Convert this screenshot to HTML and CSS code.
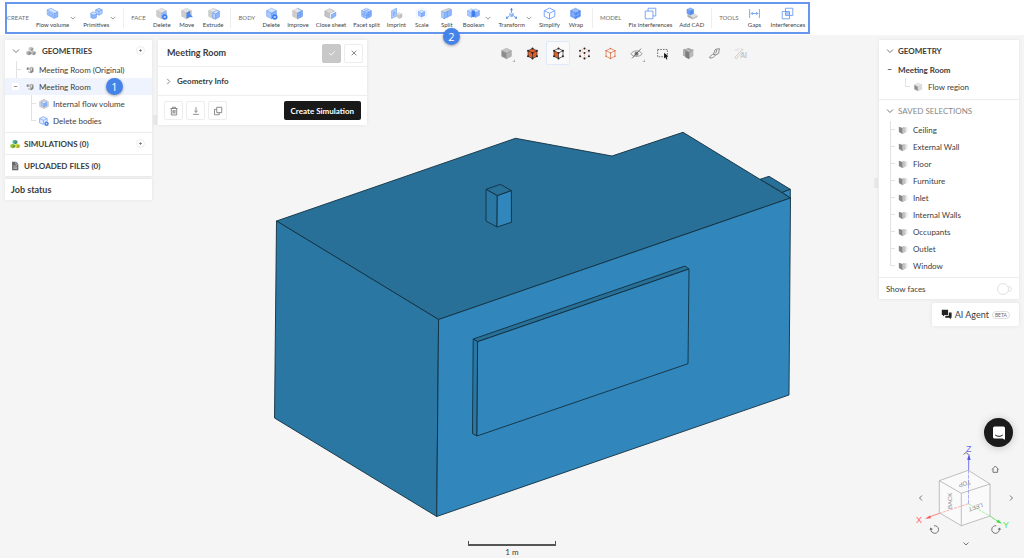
FILE: index.html
```html
<!DOCTYPE html>
<html lang="en">
<head>
<meta charset="utf-8">
<title>Meeting Room</title>
<link rel="stylesheet" href="styles.css">
</head>
<body>
<svg class="defs" aria-hidden="true">
  <symbol id="cube" viewBox="0 0 16 16">
    <path class="c-top" d="M8 1.500 14 4.500 8 7.500 2 4.500Z"/><path class="c-left" d="M2 4.500 8 7.500V14.500L2 11.500Z"/><path class="c-right" d="M14 4.500 8 7.500V14.500L14 11.500Z"/>
  </symbol>
  <symbol id="chev" viewBox="0 0 8 8"><path class="line" d="M1 2.500 4 5.500 7 2.500"/></symbol>
  <symbol id="plus" viewBox="0 0 10 10"><circle cx="5" cy="5" r="4.400" fill="#fff" stroke="#e2e2e2" stroke-width=".7"/><path d="M3.400 5h3.200M5 3.400v3.200" stroke="#666" stroke-width=".8"/></symbol>
  <symbol id="cubes" viewBox="0 0 12 12">
    <path class="k1" d="M6 .8 8.800 2v3L6 6.200 3.200 5V2Z"/><path class="k2" d="M3.200 5.800 6 7v3L3.200 11.200.4 10V7Z"/><path class="k3" d="M8.800 5.800 11.600 7v3L8.800 11.200 6 10V7Z"/><path class="kd" d="M6 3.200 8.800 2v3L6 6.200ZM3.200 8.200 6 7v3L3.200 11.200ZM8.800 8.200 11.600 7v3L8.800 11.200Z"/>
  </symbol>
  <symbol id="part" viewBox="0 0 12 12"><path d="M5 2.500 8 1 11 2V8.500L7.500 11 3 9.500V8L6 8.500V6H5Z" fill="#b4b4b4"/><path d="M7.500 4 9.500 3V7.500L7.500 8.500Z" fill="#eee"/><path d="M1 2.500 4 2V6L1 5.500ZM9.800 3.500 11 2.500V8.500L7.500 11 7 9.500Z" fill="#858585"/></symbol>
  <symbol id="faces" viewBox="0 0 12 12"><path d="M8.500 2 11.500 3V8L8.500 10Z" fill="#ebebeb"/><path d="M5.500 2 9 3V9L5.500 11Z" fill="#c4c4c4"/><path d="M1 2 5.500 3.500V11L1 8.500Z" fill="#868686"/></symbol>
</svg>

<header class="topbar">
  <nav class="tools" aria-label="Geometry operations">
    <h2 class="group">CREATE</h2>
    <button class="tool menu"><span class="cell"><svg viewBox="0 0 16 16"><path class="b1" d="M1.500 3.500 6 1.500 14.500 6 10 8Z"/><path class="b2" d="M1.500 3.500 10 8v6L1.500 9.500Z"/><path class="b3" d="M14.500 6 10 8v6l4.500-2Z"/><path class="bl" d="M1.500 3.500 6 1.500 14.500 6v6L10 14 1.500 9.500ZM10 8v6M1.500 3.500 10 8l4.500-2M3.500 6.500 8 9v2.500L3.500 9Z"/></svg>Flow volume</span><svg class="chev"><use href="#chev"/></svg></button>
    <button class="tool menu"><span class="cell"><svg viewBox="0 0 16 16"><path class="b2" d="M7 3.500 11 1.500 15 3.500V8L11 10 7 8Z"/><path class="b3" d="M1 8v4.500c0 2 7 2 7 0V8Z"/><ellipse class="b1" cx="4.500" cy="8" rx="3.500" ry="1.700"/><path class="bl" d="M7 6V3.500L11 1.500 15 3.500V8L11 10 8.500 9M7 3.500 11 5.500 15 3.500M11 5.500V10M1 8v4.500c0 2 7 2 7 0V8M1 8a3.500 1.700 0 0 0 7 0 3.500 1.700 0 0 0-7 0"/></svg>Primitives</span><svg class="chev"><use href="#chev"/></svg></button>
    <hr>
    <h2 class="group">FACE</h2>
    <button class="tool"><span class="cell"><svg viewBox="0 0 16 16"><g class="grey"><use href="#cube"/></g><path class="b3" d="M8 7.500 14 4.500V11L8 14Z"/><circle cx="12" cy="12.300" r="3.400" fill="#3f7ff0"/><path class="w" d="m10.800 11.100 2.400 2.400m0-2.400-2.400 2.400"/></svg>Delete</span></button>
    <button class="tool"><span class="cell"><svg viewBox="0 0 16 16"><g class="grey"><use href="#cube"/></g><path d="M8 7 12 4.500 12.500 9 16 12.500 12 12.200 8 14.500Z" fill="#4d88ee"/></svg>Move</span></button>
    <button class="tool"><span class="cell"><svg viewBox="0 0 16 16"><g class="grey"><use href="#cube"/></g><path class="b1" d="M7 7 12 4 15.500 5.500 10.500 8.500Z"/><path class="b3" d="M10.500 8.500 15.500 5.500V12L10.500 15Z"/><path class="b2" d="M7 7 10.500 8.500V15L7 13.500Z"/><path class="bl" d="M7 7 12 4 15.500 5.500V12L10.500 15 7 13.500ZM7 7 10.500 8.500 15.500 5.500M10.500 8.500V15"/></svg>Extrude</span></button>
    <hr>
    <h2 class="group">BODY</h2>
    <button class="tool"><span class="cell"><svg viewBox="0 0 16 16"><g class="blue"><use href="#cube"/></g><circle cx="12" cy="12.300" r="3.400" fill="#3f7ff0"/><path class="w" d="m10.800 11.100 2.400 2.400m0-2.400-2.400 2.400"/></svg>Delete</span></button>
    <button class="tool"><span class="cell"><svg viewBox="0 0 16 16"><g class="grey"><use href="#cube"/></g><path class="b3" d="M8 7.500 14 4.500V11.500L8 14.500Z"/><path class="bl" d="M8 7.500 14 4.500V11.500L8 14.500ZM10 6.500v7M12 5.500v7M8 11l6-3M8 1.500 14 4.500"/></svg>Improve</span></button>
    <button class="tool"><span class="cell"><svg viewBox="0 0 16 16"><path d="M1 5 7 2l6 3-6 3Z" fill="#ddd"/><path d="M1 5 7 8v6l-6-3Z" fill="#c4c4c4"/><path class="gl" d="M1 5 7 2l6 3-6 3ZM1 5v6l6 3V8"/><path class="b3" d="M9 9.500 14.500 6.500V11L9 14.500Z"/><path class="bl" d="M9 9.500 14.500 6.500V11L9 14.500Z"/></svg>Close sheet</span></button>
    <button class="tool"><span class="cell"><svg viewBox="0 0 16 16"><g class="blue"><use href="#cube"/></g><path class="bl" d="M5 3 11 6v7M11 3 5 6v7M2 8l6 3 6-3"/></svg>Facet split</span></button>
    <button class="tool"><span class="cell"><svg viewBox="0 0 16 16"><path class="b2" d="M2 4.500 8 1.500V11L2 14Z"/><path class="bl" d="M2 4.500 8 1.500V11L2 14ZM4 6.500 6 5.500V9.500L4 10.500Z"/><g class="grey"><use href="#cube" x="7" y="6" width="9" height="9"/></g></svg>Imprint</span></button>
    <button class="tool"><span class="cell"><svg viewBox="0 0 16 16"><path d="M8 .8 14.500 4.500V11.500L8 15.200 1.500 11.500V4.500Z" fill="none" stroke="#cfe0fd" stroke-width=".6"/><g class="blue"><use href="#cube" x="2.500" y="2.500" width="11" height="11"/></g></svg>Scale</span></button>
    <button class="tool"><span class="cell"><svg viewBox="0 0 16 16"><path d="M2 5 11 1.500 14 3 5 7Z" fill="#d8d8d8"/><path class="b3" d="M5 7 14 3V10L5 14.500Z"/><path class="b2" d="M2 5 5 7v7.500L2 12.500Z"/><path class="bl" d="M5 7 14 3V10L5 14.500ZM2 5l3 2M2 5v7.500l3 2M9 5.500v7"/><path class="gl" d="M2 5 11 1.500 14 3"/></svg>Split</span></button>
    <button class="tool menu"><span class="cell"><svg viewBox="0 0 16 16"><g class="blue"><use href="#cube" x="-1" y="1" width="13" height="13"/><use href="#cube" x="4" y="1" width="13" height="13"/></g><path d="M6 5 8 4 10 5V11.500L8 12.500 6 11.500Z" fill="#3f7ff0"/></svg>Boolean</span><svg class="chev"><use href="#chev"/></svg></button>
    <button class="tool menu"><span class="cell"><svg viewBox="0 0 16 16"><g class="blue"><use href="#cube" x="4.500" y="6" width="7" height="7"/></g><path d="M8 7V2M5 11.500 1.500 13.500M11 11.500 14.500 13.500" fill="none" stroke="#4d88ee"/><path d="M8 1 9.800 4H6.200ZM1 14.500 2 11.500 4.200 14.300ZM15 14.500 14 11.500 11.800 14.300Z" fill="#4d88ee"/></svg>Transform</span><svg class="chev"><use href="#chev"/></svg></button>
    <button class="tool"><span class="cell"><svg viewBox="0 0 16 16"><path class="bb" d="M8 1.300 14.500 4.500V11.500L8 14.800 1.500 11.500V4.500ZM1.500 4.500 8 7.700 14.500 4.500M8 7.700V14.800"/></svg>Simplify</span></button>
    <button class="tool"><span class="cell"><svg viewBox="0 0 16 16"><g class="deep"><use href="#cube"/></g><path d="M5 3 11 6M11 3 5 6M5 6v7M11 6v7M2 8l6 3 6-3" fill="none" stroke="#a9c8ff" stroke-width=".6"/></svg>Wrap</span></button>
    <hr>
    <h2 class="group">MODEL</h2>
    <button class="tool"><span class="cell"><svg viewBox="0 0 16 16"><path class="bb" d="M5 5V1.500H14.500V11H11M1.500 5H11V14.500H1.500Z"/></svg>Fix interferences</span></button>
    <button class="tool"><span class="cell"><svg viewBox="0 0 16 16"><path d="M3 9 9 6l6.500 4-6 3Z" fill="#ddd"/><path d="M3 9l6.500 4v2.500L3 12Z" fill="#aaa"/><path d="M15.500 10l-6 3v2.500l6-3Z" fill="#c4c4c4"/><g class="deep"><use href="#cube" x="1" y="0" width="11" height="11"/></g></svg>Add CAD</span></button>
    <hr>
    <h2 class="group">TOOLS</h2>
    <button class="tool"><span class="cell"><svg viewBox="0 0 16 16"><path class="bb" d="M2 2.500V13.500M14 2.500V13.500M4 8H12M6 6 4 8l2 2M10 6l2 2-2 2"/></svg>Gaps</span></button>
    <button class="tool"><span class="cell"><svg viewBox="0 0 16 16"><path d="M6 5.500h4.500V10H6Z" fill="#a9c8ff"/><path class="bb" d="M5.500 1.500H14.500V10.500H5.500ZM1.500 5.500H10.500V14.500H1.500Z"/></svg>Interferences</span></button>
    <span class="badge badge-two">2</span>
  </nav>
</header>

<main class="stage">
  <svg class="scene" viewBox="0 35 1024 523" role="img" aria-label="Meeting room model">
    <g stroke="#12303f" stroke-width=".9" stroke-linejoin="round">
      <path fill="#287098" d="M760 179.300 769 176.300 790.300 189.300 782.400 192.300Z"/>
      <path fill="#3187bc" d="M782.400 192.300 790.300 189.300V198Z"/>
      <path fill="#287098" d="M276.500 221 515.500 138.300 612 156 683 132.300 790.500 198 438.600 319.500Z"/>
      <path fill="#2a77a4" d="M276.500 221 438.600 319.500 436.700 516.500 274.500 418Z"/>
      <path fill="#3187bc" d="M438.600 319.500 790.500 198 789 395 436.700 516.500Z"/>
      <path fill="#287098" d="M486 189.300 500.400 184.300 511.400 190.700 497.300 195.700Z"/>
      <path fill="#2a77a4" d="M486 189.300 497.300 195.700 497 227 486 221Z"/>
      <path fill="#3187bc" d="M497.300 195.700 511.400 190.700V222.300L497 227Z"/>
      <path fill="#287098" d="M473.200 339 685 266 689 269 477.600 341.700Z"/>
      <path fill="#2a77a4" d="M473.200 339 477.600 341.700 477 436 472.500 433.700Z"/>
      <path fill="#3187bc" d="M477.600 341.700 689 269 688 363.700 477 436Z"/>
    </g>
  </svg>

  <div class="overlay">
    <aside class="sidebar">
      <section class="card">
        <div class="head"><svg class="i8"><use href="#chev"/></svg><svg class="i10 cubes-grey"><use href="#cubes"/></svg><h3>GEOMETRIES</h3><button class="add" aria-label="Add geometry"><svg><use href="#plus"/></svg></button></div>
        <ul class="tree">
          <li class="lvl1 stem"><svg class="i8"><use href="#part"/></svg>Meeting Room (Original)</li>
          <li class="lvl1 selected"><span class="fold">−</span><svg class="i8"><use href="#part"/></svg>Meeting Room<span class="badge badge-one">1</span></li>
          <li class="lvl2 stem"><svg class="i10" viewBox="0 0 16 16"><path d="M8 .5 15 4V12L8 15.500 1 12V4Z" fill="#d3d3d3" stroke="#b8b8b8" stroke-width=".8"/><g class="blue"><use href="#cube" x="2" y="2" width="12" height="12"/></g></svg>Internal flow volume</li>
          <li class="lvl2 stem last"><svg class="i10" viewBox="0 0 16 16"><path d="M7 1 13 4V11L7 14 1 11V4Z" fill="#e0ebff"/><path class="bb" d="M7 1 13 4V9M7 14 1 11V4L7 1M1 4 7 7 13 4M7 7V13"/><circle cx="12" cy="12.300" r="3.600" fill="#4d88ee"/><circle cx="12" cy="12.300" r="1" fill="#fff"/></svg>Delete bodies</li>
        </ul>
        <div class="head ruled"><svg class="i10 cubes-green"><use href="#cubes"/></svg><h3>SIMULATIONS (0)</h3><button class="add" aria-label="Add simulation"><svg><use href="#plus"/></svg></button></div>
        <div class="head ruled"><svg class="i10" viewBox="0 0 12 12"><path d="M2.500 1H7.500L10 3.500V11H2.500Z" fill="#666"/><path d="M7 1v3h3M4 6h4.500M4 7.500h4.500M4 9h4.500" fill="none" stroke="#ddd" stroke-width=".7"/></svg><h3>UPLOADED FILES (0)</h3></div>
      </section>
      <section class="card job"><h3>Job status</h3></section>
    </aside>
    <span class="grip grip-left"></span>
    <section class="card details">
      <div class="d-head"><h1>Meeting Room</h1><button class="sq off" aria-label="Apply"><svg viewBox="0 0 12 12"><path d="M2.500 6.300 5 8.500 9.500 3.800" fill="none" stroke="#fff"/></svg></button><button class="sq" aria-label="Close"><svg viewBox="0 0 12 12"><path class="line" d="m3.200 3.200 5.600 5.600m0-5.600L3.200 8.800"/></svg></button></div>
      <button class="d-info"><svg class="turn"><use href="#chev"/></svg>Geometry Info</button>
      <div class="d-foot">
        <button class="sq" aria-label="Delete"><svg viewBox="0 0 12 12"><path class="line" d="M1.800 3H10.200M4.200 3V1.500H7.800V3M2.800 3V10.800H9.200V3M4.800 4.800V9M6 4.800V9M7.200 4.800V9"/></svg></button>
        <button class="sq" aria-label="Download"><svg viewBox="0 0 12 12"><path class="line" d="M6 1.500V7.500M4 5.700 6 7.700 8 5.700M2.500 10H9.500"/></svg></button>
        <button class="sq" aria-label="Duplicate"><svg viewBox="0 0 12 12"><path class="line" d="M4.500 1.500H10.500V8H4.500ZM4.500 4H1.800V10.500H7.500V8"/></svg></button>
        <button class="create">Create Simulation</button>
      </div>
    </section>

    <div class="viewbar" role="toolbar" aria-label="Display">
      <button aria-label="Shading"><svg viewBox="0 0 16 16"><g class="dim"><use href="#cube"/></g></svg><i></i></button>
      <button aria-label="Volumes"><svg viewBox="0 0 16 16"><path d="M8 1.800 13.500 4.500V11.500L8 14.200 2.500 11.500V4.500Z" fill="#e85d25"/><path class="kb" d="M8 1.800 13.500 4.500V11.500L8 14.200 2.500 11.500V4.500ZM2.500 4.500 8 7.300 13.500 4.500M8 7.300V14"/><path class="dots" d="M8 1.800h0M13.500 4.500h0M13.500 11.500h0M8 14.200h0M2.500 11.500h0M2.500 4.500h0M8 7.300h0"/></svg></button>
      <button class="on" aria-label="Faces"><svg viewBox="0 0 16 16"><path d="M2.500 4.500 8 7.300V14.200L2.500 11.500Z" fill="#e85d25"/><path class="kb" d="M8 1.800 13.500 4.500V11.500L8 14.200 2.500 11.500V4.500ZM2.500 4.500 8 7.300 13.500 4.500M8 7.300V14"/><path class="dots" d="M8 1.800h0M13.500 4.500h0M13.500 11.500h0M8 14.200h0M2.500 11.500h0M2.500 4.500h0M8 7.300h0"/></svg></button>
      <button aria-label="Vertices"><svg viewBox="0 0 16 16"><path d="M8 1.800 13.500 4.500V11.500L8 14.200 2.500 11.500V4.500ZM2.500 4.500 8 7.300 13.500 4.500M8 7.300V14" fill="none" stroke="#efa58a" stroke-dasharray="1.500 1"/><path class="dots" d="M8 1.800h0M13.500 4.500h0M13.500 11.500h0M8 14.200h0M2.500 11.500h0M2.500 4.500h0M8 7.300h0"/></svg></button>
      <button aria-label="Edges"><svg viewBox="0 0 16 16"><path d="M8 1.800 13.500 4.500V11.500L8 14.200 2.500 11.500V4.500ZM2.500 4.500 8 7.300 13.500 4.500M8 7.300V14" fill="none" stroke="#e87b50"/><path class="dots small" d="M8 1.800h0M13.500 4.500h0M13.500 11.500h0M8 14.200h0M2.500 11.500h0M2.500 4.500h0M8 7.300h0"/></svg></button>
      <button aria-label="Hide"><svg viewBox="0 0 16 16"><path d="M1 8.500C4 3.500 12 3.500 15 8.500 12 12.500 4 12.500 1 8.500Z" fill="none" stroke="#888"/><circle cx="8" cy="8.300" r="2.500" fill="#777"/><path d="M2.500 14 13.500 2" stroke="#555"/></svg><i></i></button>
      <button aria-label="Box select"><svg viewBox="0 0 16 16"><path d="M2 3H14V12H2Z" fill="none" stroke="#555" stroke-dasharray="2 1.300"/><path d="M10 7 15 11.500 13 12 14 15 12.800 15.400 11.700 12.600 10 14Z" fill="#111"/></svg></button>
      <button aria-label="Section"><svg viewBox="0 0 16 16"><path d="M2 3 8 1 14 3.500V11L9 14 8 13.500 2 11Z" fill="#b9b9b9"/><path d="M4 4.500 9 6.500V15L4 12.500Z" fill="#7d7d7d"/><path d="M2 3V11M2 3 7 5M9 6.500l5-3M7 2l4 2" stroke="#888" stroke-width=".8" fill="none"/></svg></button>
      <button aria-label="Measure"><svg viewBox="0 0 16 16"><path d="M7 8 9 3 14 2 13 8 9 10ZM7 8l2 2M7.500 9C5 9 2.500 10.500 2 13.500M9 10c-1 2-3 3.500-5.500 3.500L2 13.500M11 3l-1.500 5" fill="none" stroke="#777"/></svg></button>
      <button aria-label="AI assist"><svg class="wide" viewBox="0 0 18 16"><path d="M2 13 9 5l1.500 1.500L4 14.500ZM10 1.500v3M12.500 2.500 11 4.500M3 3l1 2M6 1.500V4" fill="none" stroke="#c6c6c6"/><text x="9" y="14" class="ai">AI</text></svg></button>
    </div>

    <span class="grip grip-right"></span>
    <aside class="rightbar">
      <section class="card">
        <div class="head"><svg class="i8"><use href="#chev"/></svg><h3>GEOMETRY</h3></div>
        <ul class="tree">
          <li class="root"><span class="fold">−</span>Meeting Room</li>
          <li class="region stem last"><svg class="i10 soft"><use href="#cube"/></svg>Flow region</li>
        </ul>
        <div class="head ruled"><svg class="i8"><use href="#chev"/></svg><h3 class="muted">SAVED SELECTIONS</h3></div>
        <ul class="tree saved">
          <li class="stem"><svg class="i10"><use href="#faces"/></svg>Ceiling</li>
          <li class="stem"><svg class="i10"><use href="#faces"/></svg>External Wall</li>
          <li class="stem"><svg class="i10"><use href="#faces"/></svg>Floor</li>
          <li class="stem"><svg class="i10"><use href="#faces"/></svg>Furniture</li>
          <li class="stem"><svg class="i10"><use href="#faces"/></svg>Inlet</li>
          <li class="stem"><svg class="i10"><use href="#faces"/></svg>Internal Walls</li>
          <li class="stem"><svg class="i10"><use href="#faces"/></svg>Occupants</li>
          <li class="stem"><svg class="i10"><use href="#faces"/></svg>Outlet</li>
          <li class="stem last"><svg class="i10"><use href="#faces"/></svg>Window</li>
        </ul>
        <label class="head ruled show">Show faces<input type="checkbox" role="switch"></label>
      </section>
      <button class="card agent"><svg viewBox="0 0 14 14"><path d="M1 1H9V7.500H4.500L2.500 9.500V7.500H1Z" fill="#222"/><path d="M10 4.500H13.500V11H12.500V13L10.500 11H5.500V8.500H10Z" fill="#222"/></svg>AI Agent<small>BETA</small></button>
    </aside>
  </div>

  <div class="scale">1 m</div>
  <button class="chat" aria-label="Open chat"><svg viewBox="0 0 14 14"><path d="M2.500.5h9a1.500 1.500 0 0 1 1.500 1.500V13.800L10.500 12.500H2.500A1.500 1.500 0 0 1 1 11V2A1.500 1.500 0 0 1 2.500.5Z" fill="#fff"/><path d="M3.200 9C5.500 10.800 8.500 10.800 10.800 9" fill="none" stroke="#1b1b1b"/></svg></button>
  <svg class="viewcube" viewBox="912 440 112 112" role="img" aria-label="View orientation">
    <path d="M968.300 470.300 990 484V516L961.300 525.700 939.300 512.700V480.700Z" fill="#fafafa"/>
    <path d="M968.300 503.700 939.300 513.400" stroke="#f5a0a0" stroke-width=".8" stroke-dasharray="3 1"/><path d="M968.300 503.700 990 516" stroke="#90e490" stroke-width=".8" stroke-dasharray="3 1"/><path d="M968.500 503.700V470" stroke="#a5a5f3" stroke-width=".9" stroke-dasharray="4 1"/>
    <g fill="none" stroke="#a5a5a5" stroke-width=".7"><path d="M968.300 470.300 990 484V516L961.300 525.700 939.300 512.700V480.700ZM939.300 480.700 961.300 493.300 990 484M961.300 493.300V525.700"/></g>
    <path d="M968.700 470V457" stroke="#7474ef"/><path d="M969 453.500 970.600 460H967.200Z" fill="#5757ee"/>
    <path d="M939.300 513.400 929 517" stroke="#f78080"/><path d="M925 518.700 930 515.400 931 518.300Z" fill="#f05a5a"/>
    <path d="M990 516 998 521.500" stroke="#6fe36f"/><path d="M1002 523.800 996.500 522.300 998.200 519.600Z" fill="#42d842"/>
    <text x="966" y="452" class="ax" fill="#6a6af5">Z</text><text x="916" y="523" class="ax" fill="#f66">X</text><text x="1003" y="528" class="ax" fill="#5be25b">Y</text>
    <g class="face"><text transform="translate(970 480) rotate(165)">TOP</text><text transform="translate(952 509) rotate(-90)">BACK</text><text transform="translate(982 503) rotate(162)">LEFT</text></g>
    <g fill="none" stroke="#666" stroke-width=".9"><path d="M963.500 454.500 966 452.500 968.500 454.500M922 495.500 919.500 498 922 500.500M1010 495.500 1012.500 498 1010 500.500M963.500 542.500 966 545 968.500 542.500M992 469.500 995.300 466 998.600 469.500M993 468.800V472.300H997.600V468.800M931 529a3.800 3.800 0 1 0 3-3.200M999.300 529a3.800 3.800 0 1 1-3-3.200"/></g>
    <path d="M929.600 530 930.500 527.500 933 529.300ZM1000.800 530 1000 527.500 997.500 529.300Z" fill="#666"/>
  </svg>
</main>
</body>
</html>
```
FILE: styles.css
```css
* { box-sizing: border-box; }
body {
  margin: 0;
  min-height: 100vh;
  display: flex;
  flex-direction: column;
  background: #f5f5f5;
  color: #3c3c3c;
  font: 8px/12px Lato, "Liberation Sans", sans-serif;
}
h1, h2, h3, ul { margin: 0; padding: 0; font-size: inherit; }
ul { list-style: none; }
button { padding: 0; border: 0; background: none; color: inherit; font: inherit; cursor: pointer; }
svg { display: block; flex: none; }
.defs { position: absolute; width: 0; height: 0; }

.line { fill: none; stroke: #777; stroke-width: 1; }
.c-top { fill: var(--top, #bbb); stroke: var(--edge, #999); stroke-width: .6; }
.c-left { fill: var(--left, #888); stroke: var(--edge, #999); stroke-width: .6; }
.c-right { fill: var(--right, #ddd); stroke: var(--edge, #999); stroke-width: .6; }
.grey { --top: #e4e4e4; --left: #cdcdcd; --right: #bdbdbd; --edge: #bbb; }
.blue { --top: #d7e6ff; --left: #a8c8ff; --right: #86b0fb; --edge: #5c93f3; }
.deep { --top: #8fb6fb; --left: #6c9ef6; --right: #4d88f0; --edge: #4a82e8; }
.dim { --top: #c4c4c4; --left: #8c8c8c; --right: #b0b0b0; --edge: #999; }
.soft { --top: #e8e8e8; --left: #8e8e8e; --right: #dcdcdc; --edge: #c8c8c8; }
.b1 { fill: #d7e6ff; }
.b2 { fill: #b9d2ff; }
.b3 { fill: #8fb7fc; }
.bl { fill: none; stroke: #5c93f3; stroke-width: .7; }
.gl { fill: none; stroke: #aaa; stroke-width: .7; }
.bb { fill: none; stroke: #6b9df5; stroke-width: 1.1; }
.w { fill: none; stroke: #fff; stroke-width: .8; }
.kb { fill: none; stroke: #333; stroke-width: .9; }
.dots { fill: none; stroke: #222; stroke-width: 2.4; stroke-linecap: round; }
.dots.small { stroke: #c96a45; stroke-width: 1.8; }
.ai { fill: #c0c0c0; font: bold 8px Lato, sans-serif; }

.topbar { display: flex; padding: 2px 5px 0; height: 35px; background: #fff; }
.tools {
  position: relative;
  display: flex;
  align-items: center;
  gap: 7px;
  height: 32px;
  padding: 0 3px 0 0;
  border: 2px solid #6597ec;
}
.group { color: #6e6e6e; font-size: 6px; font-weight: 400; line-height: 10px; }
.tools hr { width: 1px; height: 20px; margin: 0; border: 0; background: #eee; }
.tool { display: flex; align-items: center; gap: 1px; color: #444; font-size: 6px; line-height: 8px; white-space: nowrap; }
.cell { display: flex; flex-direction: column; align-items: center; gap: 1px; min-width: 18px; }
.cell svg { width: 13px; height: 13px; }
.tool .chev { width: 6px; height: 6px; }

.badge {
  display: grid;
  place-items: center;
  width: 17px;
  height: 17px;
  border-radius: 50%;
  background: #4583e8;
  box-shadow: 0 1px 3px #0005;
  color: #fff;
  font: 11px/17px "Open Sans", sans-serif;
}
.badge-two { position: absolute; left: 436px; top: 24px; z-index: 3; }
.badge-one { position: absolute; left: 101px; top: 0; }

.stage { position: relative; flex: 1; display: flex; }
.scene { position: absolute; inset: 0; width: 100%; height: 100%; }
.overlay { position: relative; flex: 1; display: flex; align-items: flex-start; padding: 5px 5px 0; }
.card { display: block; background: #fff; box-shadow: 0 0 4px #00000014; }
.sidebar { width: 147px; display: grid; gap: 3px; }
.head { display: flex; align-items: center; gap: 6px; height: 21px; padding: 0 7px; }
.head h3 { font-weight: 700; white-space: nowrap; }
.head .muted { color: #888; font-weight: 400; }
.ruled { height: 22px; border-top: 1px solid #ececec; }
.sidebar .ruled { gap: 4px; padding-left: 5px; }
.add { margin-left: auto; }
.add svg { width: 9px; height: 9px; }
.i8 { width: 8px; height: 8px; }
.i10 { width: 10px; height: 10px; }
.k1 { fill: var(--k1); }
.k2 { fill: var(--k2); }
.k3 { fill: var(--k3); }
.kd { fill: #00000038; }
.cubes-grey { --k1: #c4c4c4; --k2: #b0b0b0; --k3: #b8b8b8; }
.cubes-green { --k1: #4fae8c; --k2: #8fc63f; --k3: #c9d62e; }

.tree li { position: relative; display: flex; align-items: center; gap: 5px; height: 17px; white-space: nowrap; }
.tree { padding-bottom: 4px; }
.sidebar .tree { padding-bottom: 3px; }
.lvl1 { padding-left: 21px; }
.lvl2 { padding-left: 34px; }
.tree .lvl2 { gap: 4px; }
.selected { background: #eef3fd; }
.fold {
  position: absolute;
  left: 7px;
  top: 5px;
  width: 7px;
  height: 7px;
  background: #fff;
  line-height: 7px;
  text-align: center;
}
.stem::before {
  content: "";
  position: absolute;
  left: var(--stem, 11px);
  top: 0;
  width: 4px;
  height: 17px;
  border-left: 1px solid #e2e2e2;
  background: linear-gradient(#e2e2e2, #e2e2e2) 0 8px / 4px 1px no-repeat;
}
.stem.last::before { height: 9px; }
.lvl2 { --stem: 26px; }
.job { padding: 5px 6px 4px; font-size: 9px; }

.grip { width: 4px; height: 10px; background: #e8e8e8; }
.grip-left { margin: 75px 1px 0; }
.grip-right { margin: 138px 1px 0 0; }

.details { width: 209px; }
.d-head, .d-foot { display: flex; align-items: center; gap: 3px; padding: 0 4px 0 9px; }
.d-head { height: 26px; }
.d-head h1 { flex: 1; font-size: 9px; font-weight: 700; }
.sq { display: grid; place-items: center; width: 19px; height: 19px; border: 1px solid #ededed; border-radius: 2px; background: #fff; }
.sq svg { width: 10px; height: 10px; }
.off { border-color: #c8c8c8; background: #c8c8c8; }
.d-info { display: flex; align-items: center; gap: 5px; width: 100%; height: 30px; padding: 0 7px; border: solid #eee; border-width: 1px 0; font-weight: 700; }
.turn { width: 7px; height: 7px; transform: rotate(-90deg); }
.d-foot { height: 29px; padding: 0 6px; }
.create { margin-left: auto; padding: 0 7px; height: 19px; border-radius: 2px; background: #191919; color: #fff; font-weight: 700; }

.viewbar { flex: 1; display: flex; justify-content: center; gap: 2px; padding: 1px 0 0 5px; }
.viewbar button { position: relative; display: grid; place-items: center; width: 24px; height: 24px; }
.viewbar svg { width: 13px; height: 13px; }
.viewbar .wide { width: 15px; }
.viewbar .on { border: 1px solid #dfe9fb; border-radius: 2px; background: #fafafa; }
.viewbar i { position: absolute; right: 3px; bottom: 3px; border: solid transparent; border-width: 2px 0 0 2px; border-right: 1px solid #aaa; border-bottom: 1px solid #aaa; }

.rightbar { width: 140px; display: grid; gap: 4px; }
.rightbar .card { min-width: 0; }
.rightbar .head { gap: 4px; }
.root { padding-left: 19px; font-weight: 700; }
.region { padding-left: 34px; --stem: 26px; }
.saved li { padding-left: 19px; }
.saved { padding-bottom: 3px; }
.show { justify-content: space-between; }
.show input {
  appearance: none;
  display: flex;
  align-items: center;
  width: 14px;
  height: 6px;
  margin: 0;
  border: 1px solid #e8e8e8;
  border-radius: 3px;
  background: #fafafa;
}
.show input::before { content: ""; flex: none; width: 10px; height: 10px; margin-left: -2px; border: 1px solid #e2e2e2; border-radius: 50%; background: #fff; }
.agent { justify-self: end; display: flex; align-items: center; gap: 3px; height: 23px; padding: 0 9px; border-radius: 2px; font-size: 9px; }
.agent svg { width: 11px; height: 11px; }
.agent small { padding: 0 2px; border: 1px solid #ddd; border-radius: 4px; color: #666; font-size: 5px; line-height: 6px; }

.scale { position: absolute; left: 50%; bottom: 0; width: 88px; margin-left: -44px; padding-top: 2px; text-align: center; }
.scale::before { content: ""; display: block; height: 3px; border: solid #555; border-width: 0 1px 2px; }
.chat { position: absolute; right: 11px; bottom: 111px; display: grid; place-items: center; width: 29px; height: 29px; border-radius: 50%; background: #1b1b1b; box-shadow: 0 1px 8px #0003; }
.chat svg { width: 14px; height: 14px; }
.viewcube { position: absolute; right: 0; bottom: 6px; width: 112px; height: 112px; }
.ax { font: 9px "Liberation Sans", sans-serif; }
.face { fill: #888; font: 6px "Liberation Sans", sans-serif; }
```
